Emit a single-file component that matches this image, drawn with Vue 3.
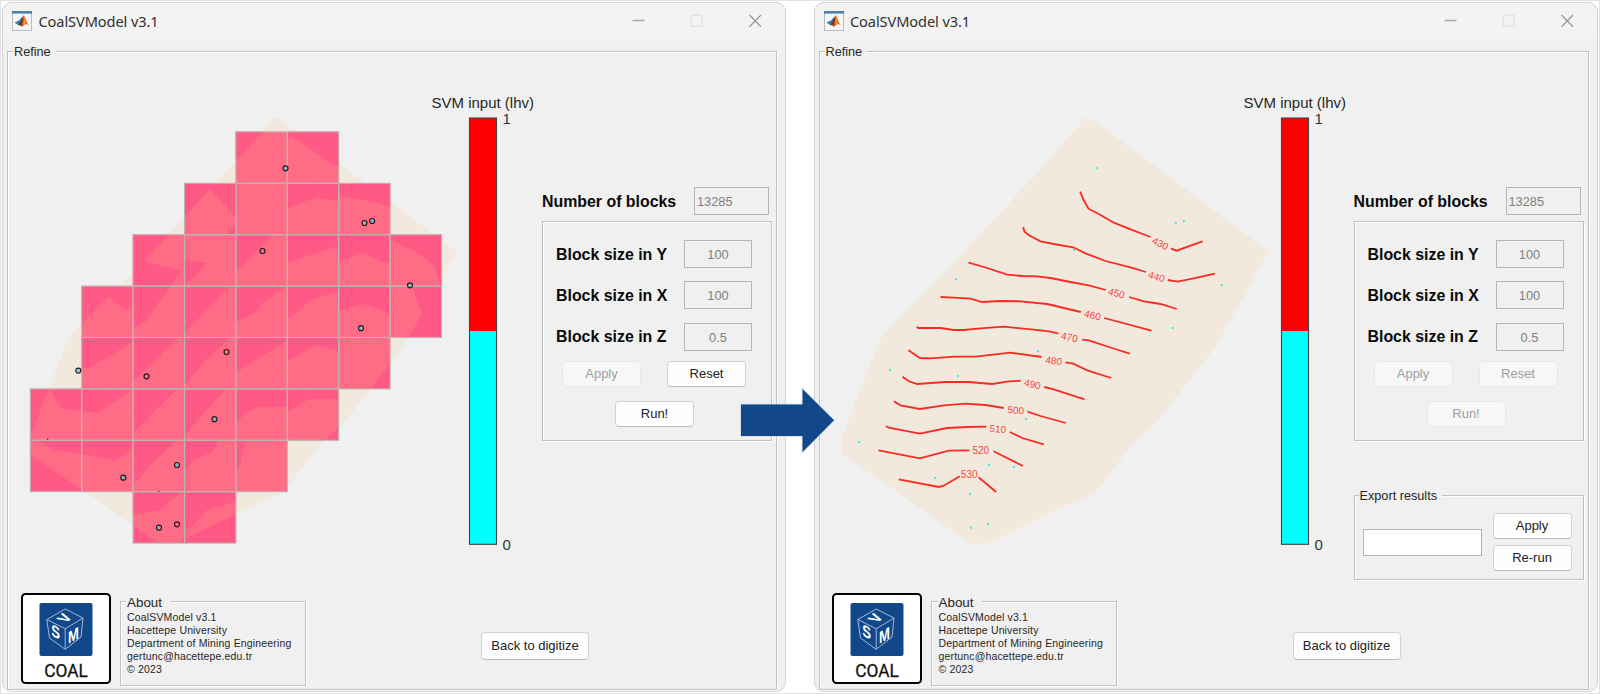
<script setup>
const surface = '272.5,118 277,118 296,131 457,251.5 444,275 402,349 348,418 320,445 283.5,492 236,514 175,543.5 158.5,543.5 88,494 29.5,454 29.5,439 65,346 70,336 147,257 190,211 248.5,147 262,131'

const size = 51.4
const rows = [[4, 5], [3, 6], [2, 7], [1, 7], [1, 6], [0, 5], [0, 4], [2, 3]]
const cells = rows.flatMap(([from, to], r) =>
  Array.from({ length: to - from + 1 }, (_, i) => ({
    x: 30.3 + (from + i) * size,
    y: 131.9 + r * size,
  }))
)

const shades = [
  '235.5,131.5 264,131.5 252,142 247,149 235.5,160',
  '287.5,131.5 338.5,131.5 338.5,167 330,163 293,137 287.5,139',
  '184.5,183.5 235.5,183.5 235.5,220 230,211 210,189 184.5,214',
  '235.5,224 226,234.7 235.5,234.7',
  '287.5,183.5 338.5,183.5 338.5,201 330,200 318,197 287.5,208',
  '338.5,183.5 390.5,183.5 390.5,209 382,204 338.5,195',
  '132.7,234.7 168,234.7 145,257 147,262 182,271 170,286.5 132.7,286.5',
  '184.5,260 206,263 201,270 184.5,286',
  '235.5,234.7 271,234.7 262,246 247,261 235.5,272',
  '287.5,234.7 338.5,234.7 338.5,246 310,255 287.5,263',
  '338.5,234.7 390.5,234.7 390.5,264 380,261 363,253 338.5,262',
  '390.5,234.7 441.5,234.7 441.5,286 434,266 420,254 390.5,240',
  '81.7,286.5 132.7,286.5 132.7,307 125,310 108,296 81.7,321',
  '132.7,286.5 170,286.5 145,322 132.7,328',
  '184.5,286.5 230,286.5 184.5,333',
  '235.5,286.5 286,286.5 264,302 255,312 235.5,323',
  '287.5,286.5 338.5,286.5 338.5,291 312,300 287.5,319',
  '338.5,286.5 390.5,286.5 390.5,316 380,309 363,304 338.5,311',
  '412,286.5 441.5,286.5 441.5,337.7 411,337.7 422,314',
  '81.7,337.7 132.7,337.7 132.7,342 90,368 81.7,368',
  '132.7,337.7 178,337.7 160,355 143,373 132.7,381',
  '184.5,337.7 230,337.7 205,361 184.5,385',
  '235.5,337.7 287.5,337.7 287.5,341 262,356 235.5,373',
  '287.5,337.7 338.5,337.7 338.5,351 315,345 287.5,362',
  '51,389.5 81.7,389.5 81.7,411 62,408 54,398',
  '81.7,389.5 132.7,389.5 97,413 81.7,411',
  '132.7,389.5 177,389.5 155,411 132.7,434',
  '184.5,389.5 226,389.5 205,412 184.5,436',
  '235.5,389.5 287.5,389.5 287.5,407 257,407 245,414 235.5,424',
  '287.5,389.5 338.5,389.5 338.5,399 309,399 288,412',
  '40,440.5 81.7,440.5 81.7,454 56,450 43,444',
  '81.7,440.5 132.7,440.5 132.7,448 115,461 100,457 81.7,454',
  '132.7,440.5 177,440.5 150,465 140,478 132.7,483',
  '184.5,440.5 218,440.5 213,452 195,459 184.5,470',
  '235.5,440.5 245,440.5 240,465 235.5,472',
  '132.7,492.5 181,492.5 160,510 132.7,515',
  '184.5,492.5 235.5,492.5 235.5,502 207,510 192,527 184.5,530',
]

const drills = [
  [285.5, 168.3, 1], [364.5, 223, 1], [372.2, 221, 1], [262.5, 251, 0], [410, 285.3, 1],
  [361, 328.2, 1], [226.5, 352, 0], [146.5, 376.3, 0], [78.3, 370.6, 1], [214.5, 419.2, 1],
  [177, 465, 1], [123.3, 477.7, 1], [159, 527.7, 1], [177, 524.3, 0],
]

const samples = [
  [284.8, 168.3], [363.8, 223], [371.8, 221], [262, 250], [409.7, 285], [360.8, 328],
  [144.2, 279], [78, 370], [146, 376], [226, 351], [214, 419], [47, 442], [177, 465],
  [202, 467], [123, 478], [158, 494], [159, 527.7], [176, 523.7],
]

const contours = [
  { v: 430, x: 348.2, y: 243.7, a: 26, l: ['268.2,191.7 271.2,199.3 276.5,208.7 288.5,215 301.8,222.7 318.5,229.3 338.5,237', '358.8,248.3 364.5,250.7 390.5,241.3'] },
  { v: 440, x: 344.5, y: 276.7, a: 17, l: ['211.2,227 212.5,231.7 216.8,235.3 228.5,241.3 241.8,244 261.2,247.3 273.5,253.3 293.5,261 318.5,267.3 333.8,272', '355.8,280 365.8,281.7 385.2,277.7 402.8,273.7'] },
  { v: 450, x: 304.5, y: 293.3, a: 15, l: ['156.5,262.7 175.2,268 195.2,274.7 210,276 225.2,276.3 238.5,278 258.5,282 276.8,285.3 293.8,290', '317.2,297 331.8,301.3 348.5,304 364.8,309'] },
  { v: 460, x: 280.5, y: 315.3, a: 13, l: ['128.5,297 141.8,297.7 158.5,298.7 170.2,302 188.5,301 208.5,301.3 235.2,304 268.8,312', '292.2,318 339.5,330.7'] },
  { v: 470, x: 257.5, y: 337.3, a: 13, l: ['104.8,326.7 106.2,328 128.5,328 141.8,330 151.8,330 168.5,328.3 191.8,326.7 221.8,329.7 238.5,331.7 246.5,333.7', '270.2,339.7 276.8,340.3 306.2,350 317.8,353.7'] },
  { v: 480, x: 241.8, y: 360.7, a: 8, l: ['96.5,350.3 107.8,358 118.5,358.3 141.8,356.7 163.5,356.7 198.5,352.7 229.5,357', '253.5,362.3 261.2,363.7 275.2,370.3 299.2,378'] },
  { v: 490, x: 220.5, y: 384.3, a: 14, l: ['90.5,376.7 96.8,381.3 105.2,384 133.5,382 156.8,382 180.2,384 195.2,381.7 208.8,380.7', '232.2,387 241.8,389.3 272.5,399.3'] },
  { v: 500, x: 203.8, y: 410.3, a: 4, l: ['81.8,401.3 88.5,405.3 107.8,409 131.8,405.3 153.5,403.7 173.5,405 191.8,408', '215.5,411.7 228.5,416 253.8,423'] },
  { v: 510, x: 185.8, y: 429, a: 5, l: ['73.8,426 76.8,427.7 107.8,433.7 135.2,428 155.2,427 174.5,426.7', '197.8,432 210.2,438 231.8,444.3'] },
  { v: 520, x: 168.8, y: 450.3, a: 0, l: ['66.5,450.3 107.8,458.3 136.8,450.7 157.5,450.3', '181.5,451.3 210.8,466'] },
  { v: 530, x: 157.2, y: 474.7, a: 0, l: ['86.8,479.3 126.8,487 131.2,486 147.8,476.3', '166.5,477.3 184.2,492'] },
]

const sizes = [
  { axis: 'Y', value: '100' },
  { axis: 'X', value: '100' },
  { axis: 'Z', value: '0.5' },
]

const windows = [
  { id: 'setup', finished: false },
  { id: 'result', finished: true },
]

const about = [
  'CoalSVModel v3.1',
  'Hacettepe University',
  'Department of Mining Engineering',
  'gertunc@hacettepe.edu.tr',
  '© 2023',
]
</script>

<template>
  <main class="desk">
    <section v-for="w in windows" :key="w.id" class="window">
      <header class="titlebar">
        <svg class="app-icon" width="20" height="20" viewBox="0 0 20 20">
          <rect x=".5" y=".5" width="19" height="19" fill="#f4f6f8" stroke="#b9bcc0" />
          <rect x="0" y="0" width="20" height="2.6" fill="#4f7fb4" />
          <path d="M2.5 11.6 L7 9.4 L10.6 5.5 L9.5 11 L6.4 14.2 Z" fill="#2f7fae" />
          <path d="M6.4 14.2 L9 9.3 L11.6 4.3 L12 9 L9.6 15.8 L8.3 14.2 Z" fill="#7c2a22" />
          <path d="M11.6 4.3 Q13 5.5 14.3 9.5 T17.5 15.3 Q14.5 12 12.8 13.6 T9.6 16 Q11 10 11.6 4.3Z" fill="#e8641b" />
          <path d="M12 5.5 Q12.6 9 11.4 13.2 L13.5 12.4 Q13.4 8 12 5.5Z" fill="#f6a53a" />
        </svg>
        <h1>CoalSVModel v3.1</h1>
        <svg class="controls" width="130" height="14" viewBox="0 0 130 14" fill="none">
          <path d="M.5 6.5H12.5" stroke="#a8a8a8" stroke-width="1.4" />
          <rect x="59" y="1.2" width="11" height="11" rx="1" stroke="#e0e0e0" stroke-width="1.3" />
          <path d="M117.5 1 L129 12.7 M129 1 L117.5 12.7" stroke="#999" stroke-width="1.3" />
        </svg>
      </header>

      <div class="group panel">
        <div class="legend"><span>Refine</span></div>
        <div class="work">
          <svg class="plot" width="532" height="470" viewBox="8 90 532 470">
            <defs>
              <pattern :id="'dots-' + w.id" width="2.33" height="2.33" patternUnits="userSpaceOnUse">
                <rect width="1.1" height="1.1" :fill="w.finished ? '#f3e2cf' : '#ff8577'" opacity=".35" />
              </pattern>
              <clipPath :id="'surface-' + w.id"><polygon :points="surface" /></clipPath>
            </defs>
            <polygon :points="surface" fill="#f2e9de" />
            <template v-if="!w.finished">
              <rect v-for="(c, i) in cells" :key="'a' + i" :x="c.x" :y="c.y" :width="size" :height="size" fill="#ff5a86" />
              <g :clip-path="`url(#surface-${w.id})`">
                <rect v-for="(c, i) in cells" :key="'b' + i" :x="c.x" :y="c.y" :width="size" :height="size" fill="#ff6a86" />
                <rect v-for="(c, i) in cells" :key="'c' + i" :x="c.x" :y="c.y" :width="size" :height="size" :fill="`url(#dots-${w.id})`" />
              </g>
              <polygon v-for="(s, i) in shades" :key="'s' + i" :points="s" fill="#ff5a86" />
              <rect v-for="(c, i) in cells" :key="'d' + i" :x="c.x" :y="c.y" :width="size" :height="size" fill="none" stroke="#c2b2b2" stroke-width="1.1" />
              <g v-for="(d, i) in drills" :key="'e' + i">
                <circle :cx="d[0]" :cy="d[1]" r="2.5" fill="none" stroke="#2b1a20" stroke-width="1.2" />
                <circle v-if="d[2]" :cx="d[0]" :cy="d[1]" r="1.4" fill="#45d5d8" />
              </g>
              <rect x="47" y="438.7" width="1.3" height="1" fill="#40101c" />
              <rect x="158" y="490.8" width="1.3" height="1" fill="#40101c" />
            </template>
            <template v-else>
              <polygon :points="surface" :fill="`url(#dots-${w.id})`" />
              <rect v-for="(p, i) in samples" :key="'p' + i" :x="p[0] - 1" :y="p[1] - 1" width="2" height="2" fill="#33eee4" />
              <g v-for="c in contours" :key="c.v">
                <polyline v-for="(l, i) in c.l" :key="i" :points="l" class="contour" />
                <text :transform="`translate(${c.x} ${c.y}) rotate(${c.a})`" y="3.4" class="elevation">{{ c.v }}</text>
              </g>
            </template>
            <text x="431.5" y="108.3" class="axis title">SVM input (lhv)</text>
            <rect x="469" y="118" width="27.5" height="213" fill="#f00" />
            <rect x="469" y="331" width="27.5" height="213.5" fill="#0ff" />
            <rect x="469.5" y="118" width="27" height="426.3" fill="none" stroke="#444" stroke-width="1.1" />
            <text x="502.5" y="124.2" class="axis">1</text>
            <text x="502.5" y="549.7" class="axis">0</text>
          </svg>

          <div class="side">
            <div class="count">
              <label>Number of blocks</label>
              <div class="field wide">13285</div>
            </div>
            <div class="group blocks">
              <div v-for="s in sizes" :key="s.axis" class="size">
                <label>Block size in {{ s.axis }}</label>
                <div class="field">{{ s.value }}</div>
              </div>
              <div class="pair">
                <button class="off">Apply</button>
                <button :class="{ off: w.finished }">Reset</button>
              </div>
              <button class="run" :class="{ off: w.finished }">Run!</button>
            </div>
            <div v-if="w.finished" class="group export">
              <div class="legend"><span>Export results</span></div>
              <div class="export-row">
                <div class="entry"></div>
                <div class="stack">
                  <button>Apply</button>
                  <button>Re-run</button>
                </div>
              </div>
            </div>
          </div>
        </div>

        <footer class="foot">
          <svg class="logo" width="90" height="91" viewBox="0 0 90 91">
            <rect x="1" y="1" width="88" height="89" rx="3.5" fill="#fff" stroke="#050505" stroke-width="2" />
            <rect x="18.5" y="10" width="53" height="53" rx="2" fill="#12488a" />
            <path d="M25.8 26.5 L44.2 16 L62 25 L60 44 L44.2 56.3 L28.5 45 Z M25.8 26.5 L44.2 35.8 L62 25 M44.2 35.8 V56.3" fill="none" stroke="#a3b9d6" stroke-width="1" />
            <text class="cube" transform="matrix(.82 .4 0 1.05 34.6 44.6)">S</text>
            <text class="cube" transform="matrix(.82 -.45 0 1.05 52.4 48)">M</text>
            <text class="cube" transform="matrix(.6 -.6 .95 .4 48.6 27.2)">V</text>
            <text x="45" y="83.5" class="brand" textLength="43.5" lengthAdjust="spacingAndGlyphs">COAL</text>
          </svg>
          <div class="group about">
            <div class="legend"><span>About</span></div>
            <p v-for="line in about" :key="line">{{ line }}</p>
          </div>
          <button class="back">Back to digitize</button>
        </footer>
      </div>
    </section>

    <svg class="arrow" width="98" height="68" viewBox="738 386 98 68">
      <path d="M741 404.5H802.5V389L834 420.3L802.5 452V436H741Z" fill="#12488a" stroke="#d3dbe6" stroke-width="1.6" paint-order="stroke" />
    </svg>
  </main>
</template>

<style>
body {
  background: #fff;
  overflow: hidden;
}
</style>

<style scoped>
.desk {
  position: relative;
  box-sizing: border-box;
  width: 1600px;
  height: 694px;
  padding: 2px 0 0 2px;
  display: flex;
  gap: 27.5px;
  border-top: 1px solid #e2e2e2;
  border-bottom: 1px solid #e2e2e2;
  box-shadow: inset 1px 0 #e2e2e2, inset -1px 0 #e2e2e2;
  font-family: "Liberation Sans", Arial, sans-serif;
  font-size: 13px;
  color: #262626;
}
.window {
  flex: none;
  box-sizing: border-box;
  width: 784px;
  height: 690px;
  margin-top: -1px;
  border: 1px solid #d2d2d2;
  border-radius: 10px;
  background: #f0f0f0;
  overflow: hidden;
}
.titlebar {
  height: 36px;
  display: flex;
  align-items: center;
  padding: 0 23px 0 9px;
  background: #f3f3f3;
}
.app-icon {
  margin-bottom: 1px;
}
h1 {
  margin: 0 0 1px 6.5px;
  font: 400 14.6px/20px "Noto Sans", "Open Sans", sans-serif;
  letter-spacing: -0.1px;
  color: #303030;
}
.controls {
  margin: 0 0 1px auto;
}
.group {
  box-sizing: border-box;
  border: 1px solid #c0c0c0;
  box-shadow: 1px 1px #fff, inset 1px 1px #fff;
}
.panel {
  margin: 12px 8px 0 4px;
  height: 639px;
}
.legend {
  height: 0;
  padding-left: 5px;
}
.legend span {
  display: inline-block;
  position: relative;
  top: -8px;
  padding: 0 5px 0 1px;
  background: #f0f0f0;
  font-size: 12.7px;
  line-height: 15px;
}
.work {
  display: flex;
  box-sizing: border-box;
  height: 541px;
  padding-top: 38px;
}
.plot {
  flex: none;
}
.contour {
  fill: none;
  stroke: #fa2a22;
  stroke-width: 1.8;
}
.elevation {
  font-size: 10px;
  text-anchor: middle;
  fill: #f4453c;
}
.axis {
  font-size: 15px;
  fill: #333;
}
.title {
  fill: #262626;
}
.side {
  padding: 97px 0 0 1px;
  width: 231px;
}
label {
  padding-top: 1px;
  font-size: 15.9px;
  font-weight: 700;
  color: #0a0a0a;
}
.count {
  display: flex;
  align-items: center;
  justify-content: space-between;
  padding: 0 3px 0 1px;
}
.field {
  box-sizing: border-box;
  width: 68px;
  height: 28px;
  border: 1px solid #b4b4bc;
  font-size: 12.8px;
  line-height: 27px;
  text-align: center;
  color: #808080;
}
.field.wide {
  width: 75px;
  padding-left: 2px;
  text-align: left;
}
.blocks {
  width: 230px;
  height: 220px;
  margin: 6px 0 0 1px;
  padding: 18px 19px 0 13px;
}
.size {
  display: flex;
  align-items: center;
  justify-content: space-between;
  margin-bottom: 13.4px;
}
button {
  box-sizing: border-box;
  width: 79px;
  height: 26px;
  padding: 0;
  border: 1px solid #d2d2d2;
  border-bottom-color: #bdbdbd;
  border-radius: 4px;
  background: #fdfdfd;
  font: 13px/22px "Liberation Sans", Arial, sans-serif;
  color: #222;
}
.off {
  border-color: #e8e8e8;
  background: #f7f7f7;
  color: #a0a0a0;
}
.pair {
  display: flex;
  justify-content: space-between;
  margin: -3px 6px 0 6px;
}
.run {
  display: block;
  margin: 14px 0 0 59px;
}
.export {
  width: 230px;
  height: 85px;
  margin: 54px 0 0 1px;
}
.export .legend {
  padding-left: 4px;
}
.export-row {
  display: flex;
  justify-content: space-between;
  padding: 17px 11px 0 8px;
}
.entry {
  box-sizing: border-box;
  width: 119px;
  height: 27px;
  margin-top: 16px;
  border: 1px solid #b4b4b8;
  background: #fff;
}
.stack {
  display: flex;
  flex-direction: column;
  gap: 6px;
}
.foot {
  display: flex;
  padding-left: 12.5px;
}
.brand {
  font: 400 18.5px Roboto, sans-serif;
  text-anchor: middle;
  fill: #111;
  stroke: #111;
  stroke-width: 0.3;
}
.cube {
  font: 700 16px "Liberation Sans", sans-serif;
  text-anchor: middle;
  fill: #fff;
}
.about {
  width: 186px;
  height: 85px;
  margin: 8px 0 0 9px;
}
.about .legend {
  padding-left: 5.5px;
  margin-bottom: 9px;
}
.about .legend span {
  top: -7px;
  padding-right: 8px;
  font-size: 13.4px;
}
.about p {
  margin: 0 0 0 6.5px;
  font-size: 10.5px;
  line-height: 13px;
  letter-spacing: 0.16px;
  white-space: nowrap;
}
.back {
  width: 108px;
  height: 28px;
  margin: 39px 0 0 175.5px;
}
.arrow {
  position: absolute;
  left: 738px;
  top: 385px;
}
</style>
